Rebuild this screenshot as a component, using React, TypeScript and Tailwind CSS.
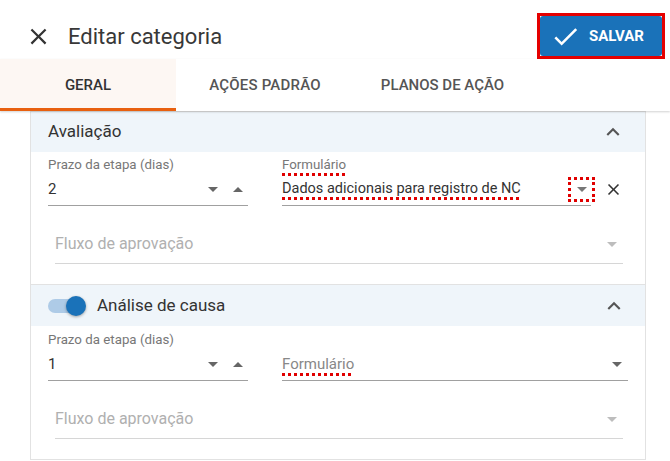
import React from "react";

const CLOSE = "M19 6.41L17.59 5 12 10.59 6.41 5 5 6.41 10.59 12 5 17.59 6.41 19 12 13.41 17.59 19 19 17.59 13.41 12z";
const CHEVRON_UP = "M12 8l-6 6 1.41 1.41L12 10.83l4.59 4.58L18 14z";
const CHECK = "M9 16.17L4.83 12l-1.42 1.41L9 19 21 7l-1.41-1.41z";

function Icon({ d, size, color }: { d: string; size: number; color: string }) {
  return (
    <svg width={size} height={size} viewBox="0 0 24 24" fill={color}>
      <path d={d} />
    </svg>
  );
}

function Caret({ up, color }: { up?: boolean; color: string }) {
  return (
    <svg width="10" height="5" viewBox="0 0 10 5" fill={color}>
      <path d={up ? "M0 5h10L5 0z" : "M0 0h10L5 5z"} />
    </svg>
  );
}

function Prazo({ value }: { value: string }) {
  return (
    <div className="w-[200px] shrink-0">
      <div className="text-[13.3px] leading-[16px] text-[#777]">Prazo da etapa (dias)</div>
      <div className="h-[33px] flex items-center border-b border-[#a0a0a0]">
        <span className="text-[15px] text-[#333]">{value}</span>
        <div className="ml-auto flex items-center gap-[15px] pr-[5px]">
          <Caret color="#666" />
          <Caret up color="#666" />
        </div>
      </div>
    </div>
  );
}

function Fluxo() {
  return (
    <div className="mt-[22px] ml-[24px] mr-[22px] h-[36px] flex items-center pb-[3px] border-b border-[#d6d6d6]">
      <span className="text-[16px] text-[#b0b0b0]">Fluxo de aprovação</span>
      <div className="ml-auto pr-[6px]">
        <Caret color="#bdbdbd" />
      </div>
    </div>
  );
}

function SectionHeader({ children }: { children: React.ReactNode }) {
  return (
    <div className="h-[40px] bg-[#eff5fa] flex items-center pl-[17px] pr-[19px]">
      {children}
      <div className="ml-auto">
        <Icon d={CHEVRON_UP} size={26} color="#555" />
      </div>
    </div>
  );
}

const spell = "underline decoration-dotted decoration-[#e00000] decoration-[3px] underline-offset-[4px]";

export default function App() {
  return (
    <div className="w-[670px] h-[461px] overflow-hidden bg-white font-['Roboto',sans-serif] text-[#333]">
      {/* Header */}
      <div className="h-[59px] pt-[13px] pl-[25px] pr-[5px]">
        <div className="h-[46px] flex items-center">
          <Icon d={CLOSE} size={27} color="#333" />
          <h1 className="ml-[16px] text-[22px] text-[#383838]">Editar categoria</h1>
          <div className="ml-auto border-[3px] border-[#e50000]">
            <button className="h-[40px] w-[122px] bg-[#1a72b9] rounded-[3px] flex items-center pl-[10px] text-white">
              <Icon d={CHECK} size={31} color="#fff" />
              <span className="ml-[8px] text-[15px] font-bold">SALVAR</span>
            </button>
          </div>
        </div>
      </div>

      {/* Tabs */}
      <div className="relative z-10 h-[52px] flex bg-white shadow-[0_1px_2px_rgba(0,0,0,0.18)]">
        <div className="w-[176px] bg-[#fdf7f3] border-b-[3px] border-[#e8600f] flex items-center justify-center pt-[3px] text-[15px] font-medium text-[#333]">
          GERAL
        </div>
        <div className="w-[178px] flex items-center justify-center text-[15px] font-medium text-[#555] tracking-[0.2px]">
          AÇÕES PADRÃO
        </div>
        <div className="w-[177px] flex items-center justify-center text-[15px] font-medium text-[#555]">
          PLANOS DE AÇÃO
        </div>
      </div>

      {/* Card */}
      <div className="ml-[30px] w-[616px] border-x border-t border-[#e2e2e2]">
        {/* Avaliação */}
        <div className="border-b border-[#e2e2e2]">
          <SectionHeader>
            <span className="text-[17px] text-[#333]">Avaliação</span>
          </SectionHeader>
          <div className="flex pl-[17px] pr-[17px] pt-[5px]">
            <Prazo value="2" />
            <div className="ml-[34px] flex-1 flex items-end">
              <div className="flex-1">
                <div className="text-[13.3px] leading-[16px] text-[#777]">
                  <span className={spell}>Formulário</span>
                </div>
                <div className="h-[33px] flex items-center border-b border-[#a0a0a0]">
                  <span className={"text-[14.5px] text-[#333] " + spell}>Dados adicionais para registro de NC</span>
                  <div className="ml-auto mr-[-4px] w-[27px] h-[25px] border-[3px] border-dotted border-[#e00000] flex items-center justify-center">
                    <Caret color="#777" />
                  </div>
                </div>
              </div>
              <div className="w-[37px] h-[33px] pl-[7px] flex items-center justify-center">
                <Icon d={CLOSE} size={19} color="#333" />
              </div>
            </div>
          </div>
          <Fluxo />
          <div className="h-[20px]" />
        </div>

        {/* Análise de causa */}
        <div className="border-b border-[#e2e2e2]">
          <div className="h-[41px] bg-[#eff5fa] flex items-center pl-[17px] pr-[18px]">
            <div className="relative w-[40px] h-[20px] flex items-center">
              <div className="w-[34px] h-[14px] rounded-full bg-[#aecbe7]" />
              <div className="absolute left-[18px] top-0 w-[20px] h-[20px] rounded-full bg-[#1a72b9] shadow-[0_1px_3px_rgba(0,0,0,0.35)]" />
            </div>
            <span className="ml-[9px] text-[17px] text-[#333]">Análise de causa</span>
            <div className="ml-auto">
              <Icon d={CHEVRON_UP} size={26} color="#555" />
            </div>
          </div>
          <div className="flex pl-[17px] pr-[17px] pt-[6px]">
            <Prazo value="1" />
            <div className="ml-[34px] flex-1 flex items-end">
              <div className="flex-1 h-[33px] flex items-center border-b border-[#a0a0a0]">
                <span className={"text-[15px] text-[#888] " + spell}>Formulário</span>
                <div className="ml-auto pr-[6px]">
                  <Caret color="#666" />
                </div>
              </div>
            </div>
          </div>
          <Fluxo />
          <div className="h-[20px]" />
        </div>
      </div>
    </div>
  );
}
